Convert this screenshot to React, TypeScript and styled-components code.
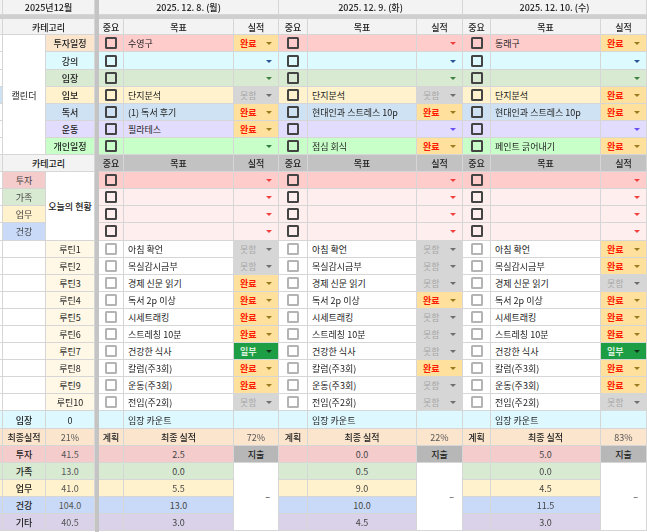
import React from 'react';
import styled, { createGlobalStyle, css } from 'styled-components';

type Result = '완료' | '못함' | '일부' | '';

const GlobalStyle = createGlobalStyle`
  html, body {
    margin: 0;
    padding: 0;
    background: #fff;
    overflow: hidden;
  }
  * {
    box-sizing: border-box;
  }
`;

const Sheet = styled.div`
  display: grid;
  width: 647px;
  height: 532px;
  overflow: hidden;
  grid-template-columns: 3px 43px 49px 4px 25px 110px 45px 29px 109px 46px 28px 110px 46px;
  grid-template-rows: 15px 4px 16.4px repeat(29, 17.1px) 1fr;
  font-family: 'Noto Sans CJK KR', 'Noto Sans', sans-serif;
  font-size: 9px;
  line-height: 1;
  color: #222;
  filter: blur(0.35px);
`;

const Divider = styled.div`
  grid-column: 4;
  grid-row: 1 / -1;
  background: #c4c4c4;
`;

const Strip = styled.div<{ $right?: boolean }>`
  grid-row: 2;
  grid-column: ${(p) => (p.$right ? '5 / -1' : '1 / 4')};
  background: #cfcfcf;
`;

const Cell = styled.div<{
  $bg?: string;
  $bold?: boolean;
  $left?: boolean;
  $end?: boolean;
  $span?: number;
  $rows?: number;
  $color?: string;
}>`
  display: flex;
  align-items: center;
  justify-content: ${(p) => (p.$left ? 'flex-start' : p.$end ? 'flex-end' : 'center')};
  min-width: 0;
  padding: 1px ${(p) => (p.$end ? '8px' : '0')} 0 ${(p) => (p.$left ? '4px' : '0')};
  white-space: nowrap;
  overflow: hidden;
  background: ${(p) => p.$bg || '#fff'};
  color: ${(p) => p.$color || '#222'};
  font-weight: ${(p) => (p.$bold ? 500 : 400)};
  border-right: 1px solid #d6d6d6;
  border-bottom: 1px solid #d6d6d6;
  ${(p) => p.$span && css`grid-column: span ${p.$span};`}
  ${(p) => p.$rows && css`grid-row: span ${p.$rows};`}
`;

const CheckBox = styled.span<{ $light?: boolean }>`
  display: block;
  width: 12px;
  height: 12px;
  margin-top: -1px;
  border-radius: 1.5px;
  border: 2px solid ${(p) => (p.$light ? '#b4b4b4' : '#444')};
`;

const Status = styled.div<{ $bg: string; $color: string; $bold?: boolean }>`
  display: flex;
  align-items: center;
  justify-content: space-between;
  min-width: 0;
  padding: 1px 6px 0;
  background: ${(p) => p.$bg};
  color: ${(p) => p.$color};
  font-weight: ${(p) => (p.$bold ? 700 : 400)};
  border-right: 1px solid #d6d6d6;
  border-bottom: 1px solid #d6d6d6;
`;

const Caret = styled.span<{ $color: string }>`
  margin-left: auto;
  width: 0;
  height: 0;
  border-left: 3px solid transparent;
  border-right: 3px solid transparent;
  border-top: 3px solid ${(p) => p.$color};
`;

const Gap = styled.span`
  flex: 0 0 0;
`;

const resultStyles: Record<string, { bg: string; color: string; caret: string; bold: boolean }> = {
  완료: { bg: '#ffe09c', color: '#ff1a00', caret: '#9c7a1e', bold: true },
  못함: { bg: '#d6d6d6', color: '#a8a8a8', caret: '#6e6e6e', bold: false },
  일부: { bg: '#1e9e44', color: '#d8f0dc', caret: '#12331c', bold: true },
};

const ResultCell = ({ value, bg, caret }: { value: Result; bg: string; caret: string }) => {
  const look = value ? resultStyles[value] : null;
  return (
    <Status $bg={look ? look.bg : bg} $color={look ? look.color : '#222'} $bold={look?.bold}>
      {value ? <span>{value}</span> : <Gap />}
      <Caret $color={look ? look.caret : caret} />
    </Status>
  );
};

const calendarRows = [
  { name: '투자일정', head: '#fce5cd', bg: '#ffcccc', caret: '#f04040', edge: '#fff' },
  { name: '강의', head: '#ddfbff', bg: '#ddfbff', caret: '#2a5590', edge: '#fff' },
  { name: '임장', head: '#d9ead3', bg: '#d9ead3', caret: '#40803f', edge: '#fff' },
  { name: '임보', head: '#fff2cc', bg: '#fff2cc', caret: '#8a7a3a', edge: '#cfe2f3' },
  { name: '독서', head: '#cfe2f3', bg: '#cfe2f3', caret: '#2a5590', edge: '#fff' },
  { name: '운동', head: '#e2dcff', bg: '#e2dcff', caret: '#6a50f0', edge: '#fff' },
  { name: '개인일정', head: '#c8ffc8', bg: '#c8ffc8', caret: '#2f7a3a', edge: '#fff' },
];

const statusRows = [
  { name: '투자', head: '#f4cccc', bg: '#ffcccc' },
  { name: '가족', head: '#d9ead3', bg: '#ffeeee' },
  { name: '업무', head: '#fff2cc', bg: '#ffeeee' },
  { name: '건강', head: '#c9daf8', bg: '#ffeeee' },
];

const routines = [
  '아침 확언',
  '목실감시금부',
  '경제 신문 읽기',
  '독서 2p 이상',
  '시세트래킹',
  '스트레칭 10분',
  '건강한 식사',
  '칼럼(주3회)',
  '운동(주3회)',
  '전임(주2회)',
];

const summaryRows = [
  { name: '투자', bg: '#f4cccc', total: '41.5' },
  { name: '가족', bg: '#d9ead3', total: '13.0' },
  { name: '업무', bg: '#fff2cc', total: '41.0' },
  { name: '건강', bg: '#c9daf8', total: '104.0' },
  { name: '기타', bg: '#d9d2e9', total: '40.5' },
];

const days = [
  {
    date: '2025. 12. 8. (월)',
    goals: ['수영구', '', '', '단지분석', '(1) 독서 후기', '필라테스', ''],
    results: ['완료', '', '', '못함', '완료', '완료', ''] as Result[],
    routine: ['못함', '못함', '완료', '완료', '완료', '완료', '일부', '완료', '완료', '못함'] as Result[],
    rate: '72%',
    totals: ['2.5', '0.0', '5.5', '13.0', '3.0'],
  },
  {
    date: '2025. 12. 9. (화)',
    goals: ['', '', '', '단지분석', '현대인과 스트레스 10p', '', '점심 회식'],
    results: ['', '', '', '못함', '완료', '', '완료'] as Result[],
    routine: ['못함', '못함', '못함', '완료', '못함', '못함', '못함', '완료', '못함', '못함'] as Result[],
    rate: '22%',
    totals: ['0.0', '0.5', '9.0', '10.0', '4.5'],
  },
  {
    date: '2025. 12. 10. (수)',
    goals: ['동래구', '', '', '단지분석', '현대인과 스트레스 10p', '', '페인트 긁어내기'],
    results: ['완료', '', '', '완료', '완료', '', '완료'] as Result[],
    routine: ['완료', '완료', '못함', '완료', '완료', '완료', '일부', '완료', '완료', '못함'] as Result[],
    rate: '83%',
    totals: ['5.0', '0.0', '4.5', '11.5', '3.0'],
  },
];

const HeaderCells = ({ bg }: { bg: string }) => (
  <>
    <Cell $bg={bg} $bold>중요</Cell>
    <Cell $bg={bg} $bold>목표</Cell>
    <Cell $bg={bg} $bold>실적</Cell>
  </>
);

export default function App() {
  return (
    <Sheet>
      <GlobalStyle />
      <Divider />

      {/* date row */}
      <Cell $bg="#f3f3f3" />
      <Cell $bg="#f3f3f3" $span={2} $bold>2025년12월</Cell>
      {days.map((d) => (
        <Cell key={d.date} $bg="#f3f3f3" $span={3} $bold>{d.date}</Cell>
      ))}
      <Strip />
      <Strip $right />

      {/* calendar header */}
      <Cell $bg="#f3f3f3" />
      <Cell $bg="#f3f3f3" $span={2} $bold>카테고리</Cell>
      {days.map((d) => (
        <HeaderCells key={d.date} bg="#f3f3f3" />
      ))}

      {/* calendar */}
      {calendarRows.map((row, i) => (
        <React.Fragment key={row.name}>
          <Cell $bg={row.edge} />
          {i === 0 && <Cell $rows={7}>캘린더</Cell>}
          <Cell $bg={row.head} $bold>{row.name}</Cell>
          {days.map((d) => (
            <React.Fragment key={d.date}>
              <Cell $bg={row.bg}><CheckBox /></Cell>
              <Cell $bg={row.bg} $left>{d.goals[i]}</Cell>
              <ResultCell value={d.results[i]} bg={row.bg} caret={row.caret} />
            </React.Fragment>
          ))}
        </React.Fragment>
      ))}

      {/* today's status */}
      <Cell $bg="#f3f3f3" />
      <Cell $bg="#f3f3f3" $span={2} $bold>카테고리</Cell>
      {days.map((d) => (
        <HeaderCells key={d.date} bg="#c2c2c2" />
      ))}
      {statusRows.map((row, i) => (
        <React.Fragment key={row.name}>
          <Cell />
          <Cell $bg={row.head} $color="#444">{row.name}</Cell>
          {i === 0 && <Cell $rows={4} $bold>오늘의 현황</Cell>}
          {days.map((d) => (
            <React.Fragment key={d.date}>
              <Cell $bg={row.bg}><CheckBox /></Cell>
              <Cell $bg={row.bg} $left />
              <ResultCell value="" bg={row.bg} caret="#f04040" />
            </React.Fragment>
          ))}
        </React.Fragment>
      ))}

      {/* routines */}
      {routines.map((name, i) => (
        <React.Fragment key={name}>
          <Cell />
          <Cell />
          <Cell $bg="#fff8e6">{`루틴${i + 1}`}</Cell>
          {days.map((d) => (
            <React.Fragment key={d.date}>
              <Cell><CheckBox $light /></Cell>
              <Cell $left>{name}</Cell>
              <ResultCell value={d.routine[i]} bg="#fff" caret="#666" />
            </React.Fragment>
          ))}
        </React.Fragment>
      ))}

      {/* visit count */}
      <Cell $bg="#ddf8ff" />
      <Cell $bg="#ddf8ff" $bold>임장</Cell>
      <Cell $bg="#ddf8ff">0</Cell>
      {days.map((d) => (
        <React.Fragment key={d.date}>
          <Cell $bg="#ddf8ff" />
          <Cell $bg="#ddf8ff" $left>임장 카운트</Cell>
          <Cell $bg="#ddf8ff" />
        </React.Fragment>
      ))}

      {/* final result */}
      <Cell $bg="#fce5cd" />
      <Cell $bg="#fce5cd" $bold>최종실적</Cell>
      <Cell $bg="#fce5cd" $color="#555">21%</Cell>
      {days.map((d) => (
        <React.Fragment key={d.date}>
          <Cell $bg="#fce5cd" $bold>계획</Cell>
          <Cell $bg="#fce5cd" $bold>최종 실적</Cell>
          <Cell $bg="#fce5cd" $color="#555">{d.rate}</Cell>
        </React.Fragment>
      ))}

      {/* hours per category */}
      {summaryRows.map((row, i) => (
        <React.Fragment key={row.name}>
          <Cell $bg={row.bg} />
          <Cell $bg={row.bg} $bold>{row.name}</Cell>
          <Cell $bg={row.bg} $color="#555">{row.total}</Cell>
          {days.map((d) => (
            <React.Fragment key={d.date}>
              <Cell $bg={row.bg} />
              <Cell $bg={row.bg} $color="#444">{d.totals[i]}</Cell>
              {i === 0 && <Cell $bg="#b7b7b7" $bold>지출</Cell>}
              {i === 1 && <Cell $rows={4} $end>–</Cell>}
            </React.Fragment>
          ))}
        </React.Fragment>
      ))}
    </Sheet>
  );
}
